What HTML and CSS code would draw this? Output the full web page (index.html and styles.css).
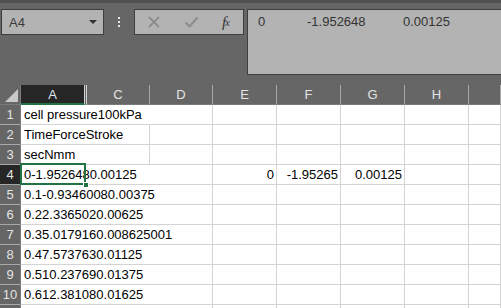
FILE: index.html
```html
<!DOCTYPE html>
<html>
<head>
    <title>Book1 - Excel</title>
    <link rel="stylesheet" href="styles.css">
</head>
<body>
    <div class="topbar">
        <div class="name-box">
            <span>A4</span>
            <span class="drop"></span>
        </div>
        <div class="grip">
            <i></i><i></i><i></i>
        </div>
        <div class="fx-buttons">
            <svg class="btn-icon" width="14" height="14" viewBox="0 0 14 14">
                <path d="M2 2 L12 12 M12 2 L2 12" stroke="#8c8c8c" stroke-width="1.8" fill="none"/>
            </svg>
            <svg class="btn-icon" width="15" height="14" viewBox="0 0 15 14">
                <path d="M1.5 7.5 L5.5 11.5 L13.5 2.5" stroke="#8c8c8c" stroke-width="2.2" fill="none"/>
            </svg>
            <span class="fx">f<sub>x</sub></span>
        </div>
        <div class="formula">
            <span class="tab1">0</span><span class="tab2">-1.952648</span><span>0.00125</span>
        </div>
    </div>

    <div class="sheet">
        <div class="grid">
            <!-- header row -->
            <div class="hdr corner">
                <svg width="13" height="13" viewBox="0 0 13 13"><polygon points="13,0 13,13 0,13" fill="#c8c8c8"/></svg>
            </div>
            <div class="hdr col sel">A</div>
            <div class="hdr col hidden-col"></div>
            <div class="hdr col">C</div>
            <div class="hdr col">D</div>
            <div class="hdr col">E</div>
            <div class="hdr col">F</div>
            <div class="hdr col">G</div>
            <div class="hdr col">H</div>
            <div class="hdr col"></div>

            <div class="hdr row">1</div>
            <div class="cell span4">cell pressure100kPa</div>
            <div class="cell"></div><div class="cell"></div><div class="cell"></div><div class="cell"></div><div class="cell"></div>

            <div class="hdr row">2</div>
            <div class="cell span3">TimeForceStroke</div>
            <div class="cell"></div><div class="cell"></div><div class="cell"></div><div class="cell"></div><div class="cell"></div><div class="cell"></div>

            <div class="hdr row">3</div>
            <div class="cell span3">secNmm</div>
            <div class="cell"></div><div class="cell"></div><div class="cell"></div><div class="cell"></div><div class="cell"></div><div class="cell"></div>

            <div class="hdr row sel-row">4</div>
            <div class="cell span4">0-1.9526480.00125</div>
            <div class="cell num">0</div><div class="cell num">-1.95265</div><div class="cell num">0.00125</div><div class="cell"></div><div class="cell"></div>

            <div class="hdr row">5</div>
            <div class="cell span4">0.1-0.93460080.00375</div>
            <div class="cell"></div><div class="cell"></div><div class="cell"></div><div class="cell"></div><div class="cell"></div>

            <div class="hdr row">6</div>
            <div class="cell span4">0.22.3365020.00625</div>
            <div class="cell"></div><div class="cell"></div><div class="cell"></div><div class="cell"></div><div class="cell"></div>

            <div class="hdr row">7</div>
            <div class="cell span4">0.35.0179160.008625001</div>
            <div class="cell"></div><div class="cell"></div><div class="cell"></div><div class="cell"></div><div class="cell"></div>

            <div class="hdr row">8</div>
            <div class="cell span4">0.47.5737630.01125</div>
            <div class="cell"></div><div class="cell"></div><div class="cell"></div><div class="cell"></div><div class="cell"></div>

            <div class="hdr row">9</div>
            <div class="cell span4">0.510.237690.01375</div>
            <div class="cell"></div><div class="cell"></div><div class="cell"></div><div class="cell"></div><div class="cell"></div>

            <div class="hdr row">10</div>
            <div class="cell span4">0.612.381080.01625</div>
            <div class="cell"></div><div class="cell"></div><div class="cell"></div><div class="cell"></div><div class="cell"></div>

            <div class="hdr row"></div>
            <div class="cell span4"></div>
            <div class="cell"></div><div class="cell"></div><div class="cell"></div><div class="cell"></div><div class="cell"></div>
        </div>

        <!-- active cell A4 -->
        <div class="active-cell"></div>
        <div class="fill-handle"></div>
    </div>
</body>
</html>
```

FILE: styles.css
```css
body {
    margin: 0;
    background-color: #666666;
    font-family: "Liberation Sans", Arial, sans-serif;
    overflow: hidden;
    width: 501px;
    height: 308px;
}

.topbar {
    height: 76px;
    border-top: 3px solid #505050;
    padding-top: 6px;
    display: flex;
    align-items: flex-start;
    background-color: #666666;
    overflow: hidden;
}

.name-box {
    margin-left: 1px;
    width: 88px;
    height: 24px;
    border: 1px solid #3e3e3e;
    background-color: #b3b3b3;
    display: flex;
    align-items: center;
    justify-content: space-between;
    padding: 0 6px 0 7px;
    font-size: 13px;
    color: #3a3a3a;
}

.drop {
    width: 0;
    height: 0;
    border-left: 4px solid transparent;
    border-right: 4px solid transparent;
    border-top: 4px solid #333;
}

.grip {
    width: 30px;
    height: 26px;
    display: flex;
    flex-direction: column;
    align-items: center;
    justify-content: center;
    gap: 2px;
}

.grip i {
    display: block;
    width: 2px;
    height: 2px;
    background-color: #e6e6e6;
}

.fx-buttons {
    width: 110px;
    height: 26px;
    border: 1px solid #3e3e3e;
    background-color: #b3b3b3;
    display: flex;
    align-items: center;
    justify-content: space-between;
    padding: 0 14px 0 12px;
    box-sizing: border-box;
}

.fx {
    font-family: "Liberation Serif", serif;
    font-style: italic;
    font-size: 15px;
    color: #333;
    letter-spacing: -1px;
}

.fx sub {
    font-size: 11px;
    vertical-align: 1px;
}

.formula {
    flex: 1;
    margin-left: 3px;
    height: 66px;
    border: 1px solid #3e3e3e;
    border-right: none;
    background-color: #b3b3b3;
    padding: 4px 0 0 10px;
    box-sizing: border-box;
    font-size: 13px;
    color: #333;
    display: flex;
}

.tab1 {
    width: 49px;
}

.tab2 {
    width: 96px;
}

.sheet {
    position: relative;
    height: 223px;
    overflow: hidden;
}

.grid {
    display: grid;
    grid-template-columns: 21px 64px 2px 63px 63px 64px 64px 64px 64px 32px;
    grid-auto-rows: 20px;
    background-color: #fff;
    font-size: 13px;
}

.hdr {
    background-color: #666666;
    color: #e4e4e4;
    box-sizing: border-box;
    display: flex;
    align-items: center;
    justify-content: center;
}

.hdr.col {
    border-right: 1px solid #a8a8a8;
    border-bottom: 1px solid #7a7a7a;
}

.hdr.hidden-col {
    border-right: 1px solid #d0d0d0;
}

.hdr.sel {
    background-color: #262626;
    color: #dfe8f0;
    border-right-color: #d0d0d0;
    border-bottom: 2px solid #217346;
}

.hdr.corner {
    border-right: 1px solid #7a7a7a;
    border-bottom: 1px solid #7a7a7a;
    align-items: flex-end;
    justify-content: flex-end;
    padding: 0 2px 2px 0;
}

.hdr.row {
    border-right: 1px solid #7a7a7a;
    border-bottom: 1px solid #a8a8a8;
}

.hdr.sel-row {
    background-color: #262626;
}

.cell {
    box-sizing: border-box;
    border-right: 1px solid #d4d4d4;
    border-bottom: 1px solid #d4d4d4;
    padding: 0 3px;
    line-height: 19px;
    white-space: nowrap;
    color: #000;
}

.span3 {
    grid-column: span 3;
}

.span4 {
    grid-column: span 4;
}

.num {
    text-align: right;
    padding-right: 2px;
}

.active-cell {
    position: absolute;
    left: 20px;
    top: 78px;
    width: 62px;
    height: 18px;
    border: 2px solid #217346;
}

.fill-handle {
    position: absolute;
    left: 83px;
    top: 97px;
    width: 4px;
    height: 4px;
    background-color: #217346;
    border: 1px solid #fff;
}
```
